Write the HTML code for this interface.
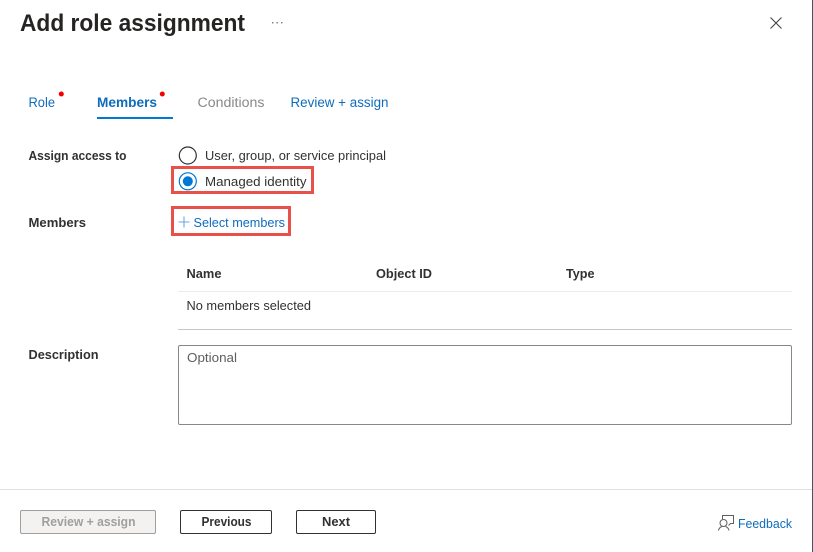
<!DOCTYPE html>
<html><head><meta charset="utf-8"><style>
html,body{margin:0;padding:0;background:#fff;width:813px;height:552px;overflow:hidden}
svg{display:block}
text{font-family:"Liberation Sans",sans-serif;font-size:13.5px;fill:#323130}
.b{font-weight:700}
.l{fill:#0f6cbd}
</style></head><body>
<svg width="813" height="552" viewBox="0 0 813 552" xmlns="http://www.w3.org/2000/svg">
<rect width="813" height="552" fill="#fff"/>
<rect x="812" y="0" width="1" height="552" fill="#44546a"/>
<text x="20" y="31" style="font-size:24px;font-weight:700;fill:#252423" textLength="225" lengthAdjust="spacingAndGlyphs">Add role assignment</text>
<g fill="#777"><rect x="272" y="22" width="1.4" height="1.4"/><rect x="276.5" y="22" width="1.4" height="1.4"/><rect x="281" y="22" width="1.4" height="1.4"/></g>
<path d="M770.500 17.500 L781.500 28.500 M781.500 17.500 L770.500 28.500" stroke="#444" stroke-width="1.100" fill="none"/>

<text x="28.500" y="107" class="l" textLength="26.500" lengthAdjust="spacingAndGlyphs">Role</text>
<circle cx="61.300" cy="94" r="2.500" fill="#f00000"/>
<text x="97" y="107" class="l b" textLength="60" lengthAdjust="spacingAndGlyphs">Members</text>
<circle cx="162.300" cy="94" r="2.500" fill="#f00000"/>
<rect x="97" y="117" width="76" height="2" fill="#0078d4"/>
<text x="197.500" y="107" style="fill:#8a8886" textLength="67" lengthAdjust="spacingAndGlyphs">Conditions</text>
<text x="290.500" y="107" class="l" textLength="98" lengthAdjust="spacingAndGlyphs">Review + assign</text>

<text x="28.500" y="160" class="b" style="font-size:13px" textLength="98" lengthAdjust="spacingAndGlyphs">Assign access to</text>
<circle cx="187.800" cy="155.500" r="8.500" fill="#fff" stroke="#323130" stroke-width="1.200"/>
<text x="205" y="160" style="font-size:13px" textLength="181" lengthAdjust="spacingAndGlyphs">User, group, or service principal</text>
<rect x="172.500" y="167.500" width="140" height="25" fill="none" stroke="#e8504a" stroke-width="3"/>
<circle cx="187.800" cy="181.300" r="8.500" fill="#fff" stroke="#0078d4" stroke-width="1.200"/>
<circle cx="187.800" cy="181.300" r="5" fill="#0078d4"/>
<text x="205" y="186" style="font-size:13px" textLength="101.500" lengthAdjust="spacingAndGlyphs">Managed identity</text>

<text x="28.500" y="227" class="b" style="font-size:13px" textLength="57.500" lengthAdjust="spacingAndGlyphs">Members</text>
<rect x="172.500" y="207.500" width="117" height="27" fill="none" stroke="#e8504a" stroke-width="3"/>
<path d="M184 216.500 V227.500 M178.500 222 H189.500" stroke="#6fa6e0" stroke-width="1.100" fill="none"/>
<text x="193.500" y="227" class="l" style="font-size:13px" textLength="91.500" lengthAdjust="spacingAndGlyphs">Select members</text>

<text x="186.500" y="278" class="b" style="font-size:13px" textLength="35" lengthAdjust="spacingAndGlyphs">Name</text>
<text x="376" y="278" class="b" style="font-size:13px" textLength="56" lengthAdjust="spacingAndGlyphs">Object ID</text>
<text x="566" y="278" class="b" style="font-size:13px" textLength="28.500" lengthAdjust="spacingAndGlyphs">Type</text>
<rect x="178" y="291" width="614" height="1" fill="#edebe9"/>
<text x="186.500" y="310" style="font-size:13px" textLength="124.500" lengthAdjust="spacingAndGlyphs">No members selected</text>
<rect x="178" y="329" width="614" height="1" fill="#c8c6c4"/>

<text x="28.500" y="359" class="b" style="font-size:13px" textLength="70" lengthAdjust="spacingAndGlyphs">Description</text>
<rect x="178.500" y="345.500" width="613" height="79" rx="1.500" fill="#fff" stroke="#8a8886" stroke-width="1"/>
<text x="187" y="362" style="font-size:13px;fill:#605e5c" textLength="50" lengthAdjust="spacingAndGlyphs">Optional</text>

<rect x="0" y="489" width="812" height="1" fill="#e1dfdd"/>
<rect x="20.500" y="510.500" width="135" height="23" rx="1.500" fill="#f3f2f1" stroke="#a19f9d"/>
<text x="41.500" y="526" class="b" style="font-size:12.500px;fill:#a19f9d" textLength="94" lengthAdjust="spacingAndGlyphs">Review + assign</text>
<rect x="180.500" y="510.500" width="91" height="23" rx="1.500" fill="#fff" stroke="#323130"/>
<text x="201.500" y="526" class="b" style="font-size:12.500px" textLength="50" lengthAdjust="spacingAndGlyphs">Previous</text>
<rect x="296.500" y="510.500" width="79" height="23" rx="1.500" fill="#fff" stroke="#323130"/>
<text x="322" y="526" class="b" style="font-size:12.500px" textLength="28" lengthAdjust="spacingAndGlyphs">Next</text>

<g fill="none" stroke="#605e5c" stroke-width="1">
<path d="M722.500 519 V515.500 H733.500 V523.500 H730.500 L728.500 525.500"/>
<circle cx="723.500" cy="523" r="3.500" fill="#fff"/>
<path d="M718.500 530.500 C719 528 720.500 527 722 526.500 M729 530.500 C728.500 528 727 527 725.500 526.500"/>
</g>
<text x="738" y="528" class="l" style="font-size:13px" textLength="54" lengthAdjust="spacingAndGlyphs">Feedback</text>
</svg>
</body></html>
